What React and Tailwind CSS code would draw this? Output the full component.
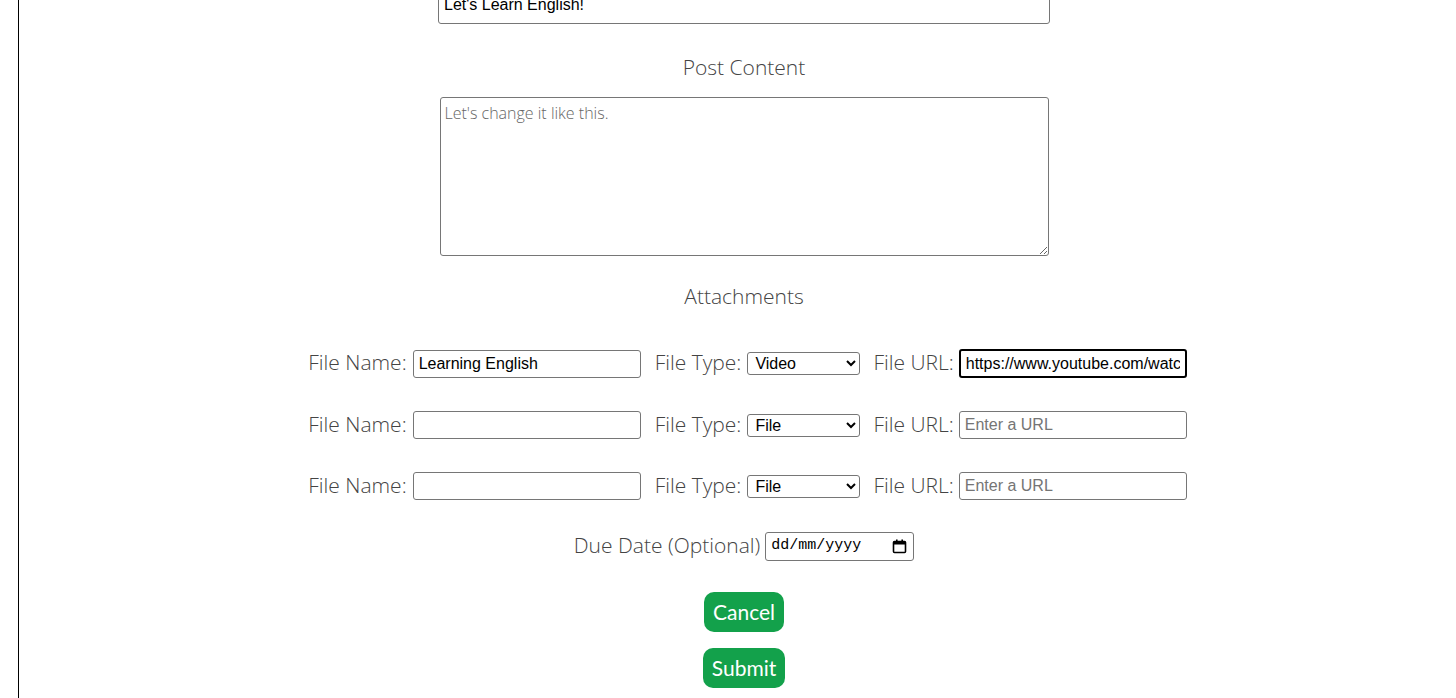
import { useState } from "react";

const labelCls =
  "font-['Open_Sans',sans-serif] font-light text-[21px] text-[#444] leading-[21px] -translate-y-[1px]";

const inputCls =
  "w-[228px] h-[28px] px-[5px] border border-[#767676] rounded-[3px] font-['Liberation_Sans',Arial,sans-serif] text-[16px] text-black placeholder:text-[#757575] outline-none";

const AttachmentRow = ({ name, type, url, focused }) => (
  <div className="flex items-center">
    <span className={labelCls}>File Name:</span>
    <input defaultValue={name} className={`${inputCls} ml-[6px]`} />
    <span className={`${labelCls} ml-[14px]`}>File Type:</span>
    <select
      defaultValue={type}
      className="ml-[6px] w-[113px] h-[23px] pl-[3px] border border-[#767676] rounded-[3px] font-['Liberation_Sans',Arial,sans-serif] text-[16px] text-black"
    >
      <option>File</option>
      <option>Video</option>
      <option>Image</option>
    </select>
    <span className={`${labelCls} ml-[13px]`}>File URL:</span>
    <input
      defaultValue={url}
      placeholder="Enter a URL"
      className={
        focused
          ? "ml-[5px] w-[228px] h-[29px] px-[5px] border-2 border-black rounded-[3px] font-['Liberation_Sans',Arial,sans-serif] text-[16px] text-black outline-none"
          : `${inputCls} ml-[5px]`
      }
    />
  </div>
);

const CalendarIcon = () => (
  <svg width="15" height="15" viewBox="0 0 15 15" className="shrink-0">
    <rect x="1.5" y="2.5" width="12" height="11" rx="1" fill="none" stroke="black" strokeWidth="1.6" />
    <rect x="1.5" y="2.5" width="12" height="3" fill="black" />
    <rect x="4" y="0.5" width="1.6" height="3" fill="black" />
    <rect x="9.4" y="0.5" width="1.6" height="3" fill="black" />
  </svg>
);

const App = () => {
  const [title, setTitle] = useState("Let's Learn English!");
  const [content, setContent] = useState("");
  const [due, setDue] = useState("");

  return (
    <div className="h-[698px] overflow-hidden bg-white">
      <div className="ml-[18px] h-full border-l border-black pl-[13px] flex flex-col items-center">
        {/* Title input, partly scrolled out of view */}
        <input
          value={title}
          onChange={(e) => setTitle(e.target.value)}
          className="-mt-[14px] w-[612px] h-[38px] px-[5px] border border-[#767676] rounded-[3px] font-['Liberation_Sans',Arial,sans-serif] text-[16px] text-black outline-none"
        />

        {/* Post content */}
        <span className={`${labelCls} mt-[34px]`}>Post Content</span>
        <textarea
          value={content}
          onChange={(e) => setContent(e.target.value)}
          placeholder="Let's change it like this."
          className="mt-[18px] w-[609px] h-[159px] px-[4px] py-[5px] border border-[#767676] rounded-[3px] font-['Open_Sans',sans-serif] font-light text-[16px] leading-[20px] placeholder:text-[#666] outline-none"
        />

        {/* Attachments */}
        <span className={`${labelCls} mt-[31px]`}>Attachments</span>
        <div className="mt-[41px] ml-[7px] flex flex-col gap-[33px]">
          <AttachmentRow
            name="Learning English"
            type="Video"
            url="https://www.youtube.com/watch?v=learn"
            focused
          />
          <AttachmentRow name="" type="File" url="" />
          <AttachmentRow name="" type="File" url="" />
        </div>

        {/* Due date */}
        <div className="mt-[32px] flex items-center">
          <span className={labelCls}>Due Date (Optional)</span>
          <label className="ml-[5px] w-[149px] h-[29px] pl-[5px] pr-[6px] flex items-center border border-[#767676] rounded-[3px]">
            <input
              value={due}
              onChange={(e) => setDue(e.target.value)}
              placeholder="dd/mm/yyyy"
              className="w-full min-w-0 font-['Liberation_Mono',monospace] text-[15px] text-black placeholder:text-black outline-none"
            />
            <CalendarIcon />
          </label>
        </div>

        {/* Actions */}
        <button className="mt-[31px] h-[40px] px-[9px] rounded-[10px] bg-[#13a14b] text-white font-['Lato',sans-serif] text-[21px]">
          Cancel
        </button>
        <button className="mt-[16px] h-[40px] px-[9px] rounded-[10px] bg-[#13a14b] text-white font-['Lato',sans-serif] text-[21px]">
          Submit
        </button>
      </div>
    </div>
  );
};

export default App;
